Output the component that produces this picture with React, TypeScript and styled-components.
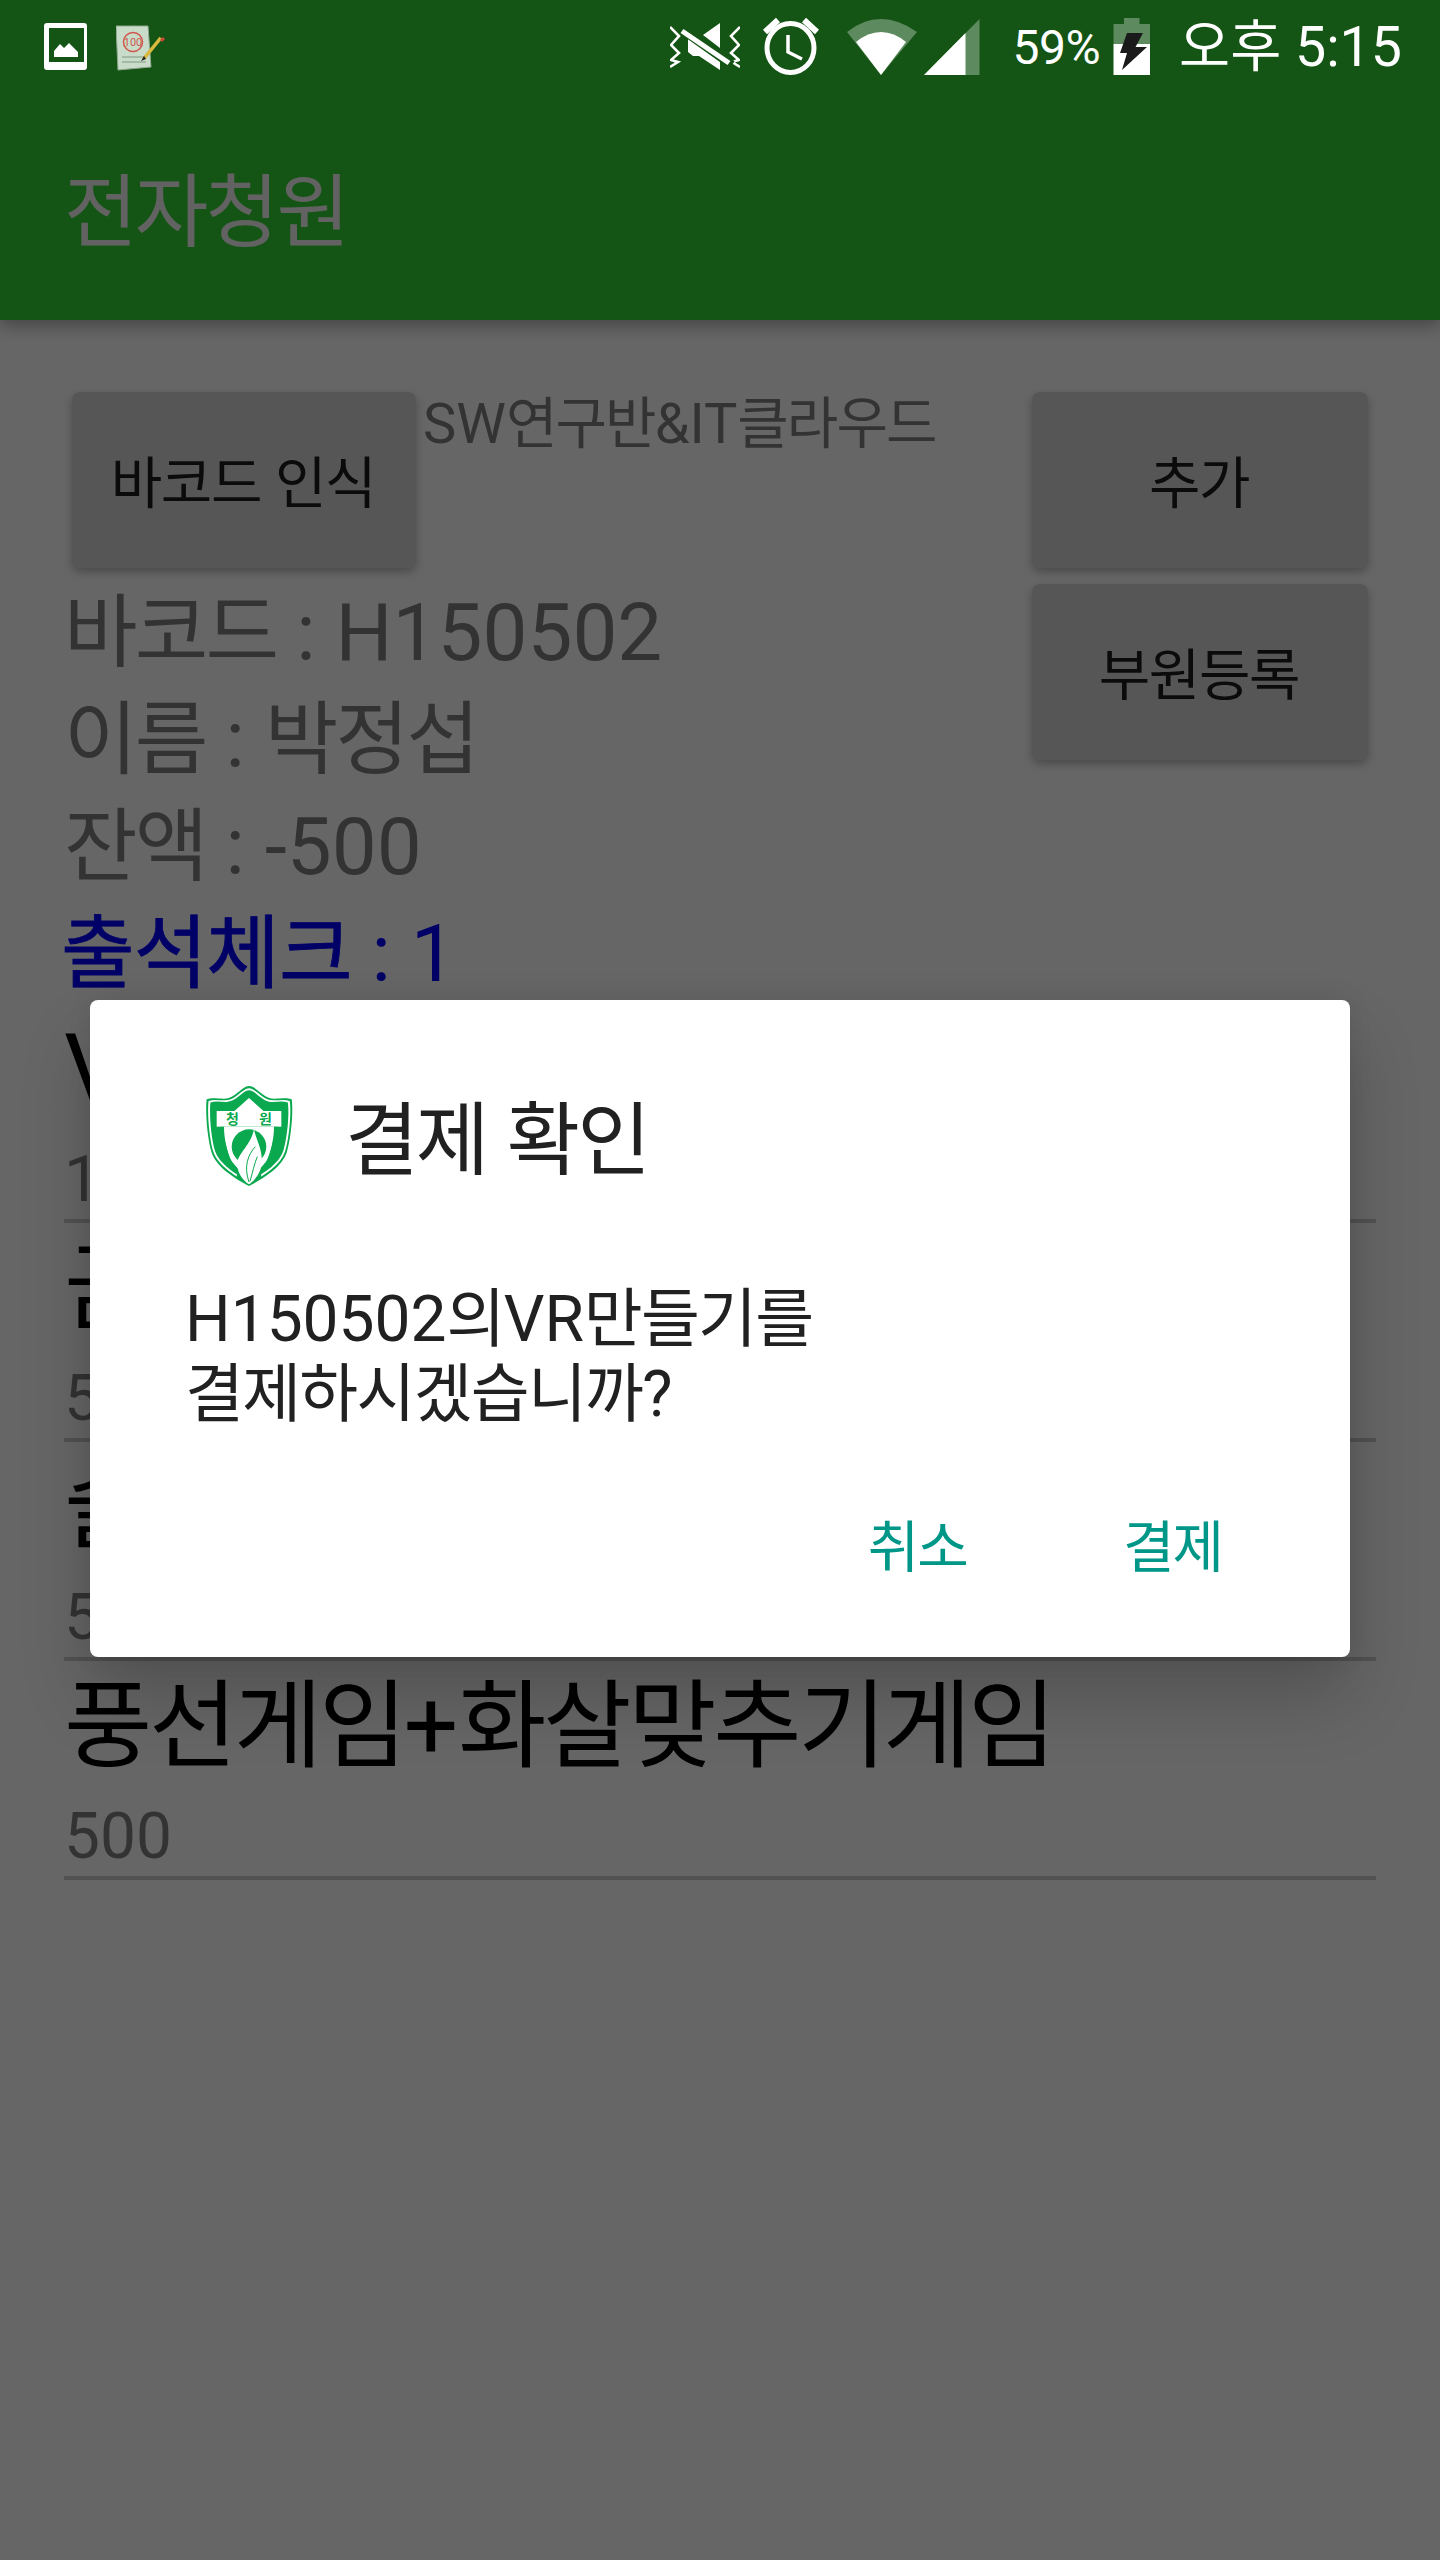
import React from "react";
import styled, { createGlobalStyle } from "styled-components";

const Global = createGlobalStyle`
  html, body { margin: 0; padding: 0; background: #fff; }
  * { box-sizing: border-box; }
`;

const FONT = `Roboto, "Noto Sans CJK KR", sans-serif`;

const Screen = styled.div`
  position: relative;
  width: 1440px;
  height: 2560px;
  overflow: hidden;
  background: #fff;
  font-family: ${FONT};
`;

const Hangul = styled.span`
  letter-spacing: -0.035em;
`;

/* The reference sets Hangul a little tighter than its Latin and digits. */
const Tx = ({ children }: { children: string }) => (
  <>
    {children.split(/([가-힣]+)/).map((part, i) =>
      i % 2 ? <Hangul key={i}>{part}</Hangul> : part
    )}
  </>
);

/* The status bar is not dimmed by the dialog's scrim, so it lies over it. */
const StatusBar = styled.div`
  position: absolute;
  z-index: 2;
  top: 0;
  left: 0;
  right: 0;
  display: flex;
  align-items: center;
  height: 96px;
  padding: 0 38px 0 44px;
  color: #fff;
`;

const Icon = styled.svg<{ $gap?: number; $auto?: boolean }>`
  display: block;
  flex: none;
  height: 96px;
  margin-left: ${(p) => (p.$auto ? "auto" : `${p.$gap ?? 0}px`)};
`;

const Battery = styled.span`
  margin-left: 32px;
  font-size: 48px;
  line-height: 96px;
  letter-spacing: -0.5px;
`;

const Clock = styled.span`
  margin-left: 28px;
  font-size: 55.5px;
  line-height: 96px;
  white-space: nowrap;
`;

const AppBar = styled.header`
  position: relative;
  display: flex;
  align-items: center;
  height: 320px;
  padding: 96px 0 6px 64px;
  background: rgb(52, 210, 50);
  box-shadow: 0 6px 16px rgba(0, 0, 0, 0.32);
`;

const AppTitle = styled.h1`
  margin: 0;
  font-size: 80px;
  font-weight: 400;
  color: #f4f4f4;
`;

const Header = styled.section`
  display: grid;
  grid-template-columns: 1fr 336px;
  padding: 72px 72px 0 64px;
`;

const LeftColumn = styled.div`
  display: flex;
  flex-direction: column;
`;

const TopRow = styled.div`
  display: flex;
  align-items: flex-start;
  padding-left: 8px;
`;

const RaisedButton = styled.button<{ $wide?: boolean }>`
  flex: none;
  width: ${(p) => (p.$wide ? "344px" : "336px")};
  height: 176px;
  border: 0;
  border-radius: 8px;
  background: #d8d8d8;
  box-shadow: 0 4px 10px rgba(0, 0, 0, 0.28);
  color: rgba(0, 0, 0, 0.87);
  font-family: ${FONT};
  font-size: 56px;
  padding: 0 2px 3px 0;

  ${Hangul} {
    letter-spacing: -0.025em;
  }
`;

const Club = styled.div`
  margin: 4px 0 0 7px;
  font-size: 56px;
  line-height: 56px;
  color: rgba(0, 0, 0, 0.5);
  white-space: nowrap;
`;

const InfoLines = styled.div`
  margin: 12px 0 -4px;
`;

const InfoLine = styled.div<{ $accent?: boolean }>`
  font-size: 80px;
  line-height: 107px;
  margin-left: ${(p) => (p.$accent ? "-3px" : "0")};
  color: ${(p) => (p.$accent ? "#0000ff" : "rgba(0,0,0,0.5)")};
  white-space: nowrap;

  ${Hangul} {
    letter-spacing: ${(p) => (p.$accent ? "-0.012em" : "-0.035em")};
    -webkit-text-stroke: ${(p) => (p.$accent ? "0.8px currentColor" : "0")};
  }
`;

const RightColumn = styled.div`
  display: flex;
  flex-direction: column;
  gap: 16px;
`;

const List = styled.ul`
  margin: 0 64px;
  padding: 0;
  list-style: none;
`;

const Row = styled.li`
  height: 219px;
  border-bottom: 4px solid #cdcdcd;
`;

const RowTitle = styled.div`
  font-size: 96px;
  line-height: 130px;
  color: #000;
  white-space: nowrap;
`;

const RowPrice = styled.div`
  margin-top: 6px;
  font-size: 64px;
  line-height: 79px;
  color: rgba(0, 0, 0, 0.5);
`;

const Scrim = styled.div`
  position: absolute;
  inset: 0;
  padding-top: 96px;
  background: rgba(0, 0, 0, 0.6);
  display: flex;
  align-items: center;
  justify-content: center;
`;

const Dialog = styled.div`
  width: 1260px;
  padding: 76px 0 54px;
  background: #fff;
  border-radius: 8px;
  box-shadow: 0 40px 70px rgba(0, 0, 0, 0.2), 0 0 24px rgba(0, 0, 0, 0.08);
`;

const DialogHead = styled.div`
  display: flex;
  align-items: center;
  height: 120px;
  padding-left: 114px;
  gap: 51px;
`;

const DialogTitle = styled.h2`
  margin: -6px 0 0;
  font-size: 80px;
  font-weight: 400;
  color: #212121;
`;

const Message = styled.p`
  margin: 86px 0 0;
  padding-left: 95px;
  font-size: 64px;
  line-height: 75px;
  color: #212121;

  ${Hangul} {
    letter-spacing: -0.027em;
  }
`;

const Actions = styled.div`
  display: flex;
  justify-content: flex-end;
  align-items: center;
  gap: 156px;
  height: 120px;
  margin-top: 51px;
  padding-right: 128px;
`;

const ActionButton = styled.button`
  border: 0;
  padding: 0;
  background: none;
  color: #009688;
  font-family: ${FONT};
  font-size: 56px;
  font-weight: 400;
`;

const Logo = () => {
  const shield =
    "M207 50C185 50 165 90 130 88C110 88 95 85 80 90C76 120 80 200 95 250C110 295 170 330 207 350C245 330 305 295 320 250C335 200 340 120 335 90C320 85 305 88 285 88C250 90 230 50 207 50Z";
  return (
    <svg width="90" height="104" viewBox="72 46 270 308" style={{ flex: "none" }}>
      <path d={shield} fill="#0aa94f" />
      <path d={shield} fill="#fff" transform="translate(207 195) scale(.955) translate(-207 -195)" />
      <path d={shield} fill="#0aa94f" transform="translate(207 195) scale(.91) translate(-207 -195)" />
      <path d="M207 86L160 128H254Z" fill="#fff" />
      <rect x="110" y="125" width="194" height="47" fill="#fff" />
      <text x="157" y="164" fontSize="42" fontWeight="700" fill="#0aa94f" textAnchor="middle" fontFamily={FONT}>청</text>
      <text x="256" y="164" fontSize="42" fontWeight="700" fill="#0aa94f" textAnchor="middle" fontFamily={FONT}>원</text>
      <path d="M128 172H286V190L262 282 207 322 152 282 128 190Z" fill="#fff" />
      <path d="M122 172H132C132 210 142 250 156 278L140 284C128 250 120 210 122 172Z" fill="#0aa94f" />
      <path d="M292 172H282C282 210 272 250 258 278L274 284C286 250 294 210 292 172Z" fill="#0aa94f" />
      <circle cx="207" cy="232" r="52" fill="#0aa94f" />
      <path d="M150 270L172 296 170 325 207 345 244 325 242 296 264 270 276 290 207 338 138 290Z" fill="#0aa94f" />
      <path d="M222 178C225 205 250 240 245 285C240 320 215 340 207 345C190 335 170 310 172 280C175 250 215 225 222 178Z" fill="#fff" />
      <path d="M226 232C205 255 190 290 207 338M232 262C222 285 218 310 210 336" fill="none" stroke="#0aa94f" strokeWidth="3" />
    </svg>
  );
};

const DIM = "#5d8a5e";

export default function App() {
  return (
    <Screen>
      <Global />

      <AppBar>
        <AppTitle><Tx>전자청원</Tx></AppTitle>
      </AppBar>

      <Header>
        <LeftColumn>
          <TopRow>
            <RaisedButton $wide><Tx>바코드 인식</Tx></RaisedButton>
            <Club><Tx>SW연구반&IT클라우드</Tx></Club>
          </TopRow>
          <InfoLines>
            <InfoLine><Tx>바코드 : H150502</Tx></InfoLine>
            <InfoLine><Tx>이름 : 박정섭</Tx></InfoLine>
            <InfoLine><Tx>잔액 : -500</Tx></InfoLine>
            <InfoLine $accent><Tx>출석체크 : 1</Tx></InfoLine>
          </InfoLines>
        </LeftColumn>
        <RightColumn>
          <RaisedButton><Tx>추가</Tx></RaisedButton>
          <RaisedButton><Tx>부원등록</Tx></RaisedButton>
        </RightColumn>
      </Header>

      <List>
        <Row>
          <RowTitle><Tx>VR만들기</Tx></RowTitle>
          <RowPrice>1000</RowPrice>
        </Row>
        <Row>
          <RowTitle><Tx>금속공예</Tx></RowTitle>
          <RowPrice>500</RowPrice>
        </Row>
        <Row>
          <RowTitle><Tx>슬라임</Tx></RowTitle>
          <RowPrice>500</RowPrice>
        </Row>
        <Row>
          <RowTitle><Tx>풍선게임+화살맞추기게임</Tx></RowTitle>
          <RowPrice>500</RowPrice>
        </Row>
      </List>

      <Scrim>
        <Dialog>
          <DialogHead>
            <Logo />
            <DialogTitle><Tx>결제 확인</Tx></DialogTitle>
          </DialogHead>
          <Message>
            <Tx>H150502의VR만들기를</Tx>
            <br />
            <Tx>결제하시겠습니까?</Tx>
          </Message>
          <Actions>
            <ActionButton><Tx>취소</Tx></ActionButton>
            <ActionButton><Tx>결제</Tx></ActionButton>
          </Actions>
        </Dialog>
      </Scrim>

      <StatusBar>
        <Icon width="43" viewBox="44 0 43 96">
          <path fillRule="evenodd" fill="#fff" d="M47 23H84Q87 23 87 26V67Q87 70 84 70H47Q44 70 44 67V26Q44 23 47 23ZM49 28V62H84V28Z" />
          <path fill="#fff" d="M54 57V51L60 44 64 48 69 43 78 52V57Z" />
        </Icon>
        <Icon width="50" $gap={29} viewBox="116 0 50 96">
          <path fill="#c9dcc9" stroke="#8fa98f" d="M116 26H148L151 67 118 70Z" />
          <circle cx="133" cy="42" r="9.5" fill="none" stroke="#cf5a50" strokeWidth="1.6" />
          <text x="133" y="46" fontSize="11" textAnchor="middle" fill="#cf5a50" fontFamily={FONT}>100</text>
          <path d="M122 57H144M122 62H146" stroke="#7f9a80" strokeWidth="1.2" />
          <path d="M143 58L162 39" stroke="#d8b93e" strokeWidth="3.4" transform="rotate(-6 150 50)" />
          <path d="M164 38L161 41" stroke="#c94a3c" strokeWidth="3" />
          <path d="M141 61L144 56 146 59Z" fill="#222" />
        </Icon>

        <Icon width="70" $auto viewBox="668 0 70 96">
          <g fill="none" stroke="#fff" strokeWidth="2.6">
            <path d="M668 27L677 36 669 45 677 53 669 60 676 62 668 67" />
            <path d="M738 27L729 36 737 45 729 53 737 60 730 62 738 67" />
          </g>
          <path fill="#fff" d="M718 23L701 35 718 48Z" />
          <path fill="#fff" d="M686 36V52L691 56H697L718 70V60Z" />
          <path stroke="#155414" strokeWidth="9" d="M678 28L730 65" />
          <path stroke="#fff" strokeWidth="5" d="M680 31L727 63" />
        </Icon>
        <Icon width="57" $gap={22} viewBox="762 0 57 96">
          <ellipse cx="790.5" cy="48" rx="23.5" ry="24.5" fill="none" stroke="#fff" strokeWidth="5" />
          <path d="M788 35V52L802 59" fill="none" stroke="#fff" strokeWidth="3.5" />
          <path d="M765 32L778 20M804 20L817 32" fill="none" stroke="#fff" strokeWidth="6" />
        </Icon>
        <Icon width="70" $gap={28} viewBox="847 0 70 96">
          <path fill={DIM} d="M881 75L847 32Q863 19 881 19T917 32Z" />
          <path fill="#fff" d="M881 75L856 42Q868 32 881 32T906 42Z" />
        </Icon>
        <Icon width="56" $gap={7} viewBox="924 0 56 96">
          <path fill={DIM} d="M924 75L979.5 19V75Z" />
          <path fill="#fff" d="M924 75L965.5 33V75Z" />
        </Icon>
        <Battery>59%</Battery>
        <Icon width="39" $gap={12} viewBox="1114 0 39 96">
          <path fill={DIM} d="M1126 18H1141.5V24H1152V44H1115.5V24H1126Z" />
          <path fill="#fff" d="M1115.5 44H1152V75H1115.5Z" />
          <path fill="#1a1a1a" d="M1129 33H1145L1137.5 47H1149L1124 70 1129 53H1122Z" />
        </Icon>
        <Clock>오후 5:15</Clock>
      </StatusBar>
    </Screen>
  );
}
